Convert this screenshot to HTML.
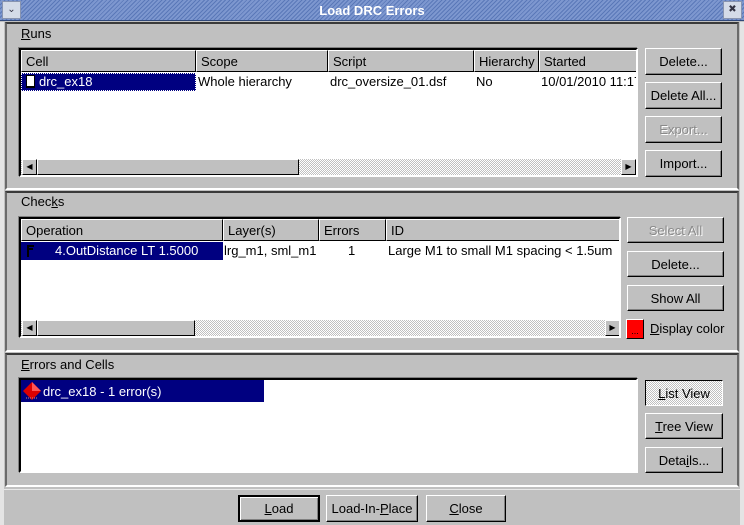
<!DOCTYPE html>
<html><head><style>
*{box-sizing:border-box;margin:0;padding:0}
body{width:744px;height:525px;background:#c0c0c0;font-family:"Liberation Sans",sans-serif;font-size:13px;color:#000;position:relative;overflow:hidden}
div{white-space:nowrap}
.a{position:absolute}
.title{left:0;top:0;width:744px;height:21px;background:repeating-linear-gradient(135deg,#5a78b8 0 1px,#7d97cf 1px 3px);border-bottom:1px solid #30487a}
.title span{position:absolute;left:0;right:0;top:3px;text-align:center;color:#fff;font-weight:bold;font-size:13px}
.tb{top:1px;width:19px;height:18px;background:#d4dbe8;border:1px solid #8894b0;font-size:10px;text-align:center;line-height:16px;color:#334}
.sec{left:5px;width:734px;border-top:2px solid #3a3a3a;border-left:2px solid #6a6a6a;border-right:2px solid #6a6a6a;border-bottom:2px solid #fff}
.box{background:#fff;border:2px solid #000;border-right-color:#fff;border-bottom-color:#fff;box-shadow:-1px -1px 0 #808080}
.hdr{top:0;height:22px;background:#c0c0c0;border:1px solid;border-color:#fff #000 #000 #fff;padding:3px 4px;overflow:hidden}
.btn{background:#c0c0c0;border:1px solid;border-color:#fff #000 #000 #fff;box-shadow:inset -1px -1px 0 #808080;text-align:center;line-height:25px}
.dis{color:#8a8a8a;text-shadow:1px 1px 0 #fff}
.sel{background:#000080;color:#fff}
.trough{background:repeating-conic-gradient(#c0c0c0 0 25%,#fff 0 50%) 0 0/2px 2px}
.sb{background:#c0c0c0;border:1px solid;border-color:#fff #000 #000 #fff}
u{text-decoration:underline}
</style></head><body>
<div class="a title"><span>Load DRC Errors</span></div>
<div class="a tb" style="left:2px">&#8964;</div>
<div class="a tb" style="left:723px">&#10006;</div>
<div class="a" style="left:0;top:22px;width:4px;height:503px;background:#e4e4e4"></div>
<div class="a" style="left:740px;top:22px;width:4px;height:503px;background:#e4e4e4"></div>

<!-- Runs -->
<div class="a sec" style="top:22px;height:168px"></div>
<div class="a" style="left:21px;top:26px"><u>R</u>uns</div>
<div class="a box" style="left:19px;top:48px;width:619px;height:129px;overflow:hidden">
 <div class="a hdr" style="left:0;width:175px">Cell</div>
 <div class="a hdr" style="left:175px;width:132px">Scope</div>
 <div class="a hdr" style="left:307px;width:146px">Script</div>
 <div class="a hdr" style="left:453px;width:65px">Hierarchy</div>
 <div class="a hdr" style="left:518px;width:100px">Started</div>
 <div class="a sel" style="left:0;top:23px;width:175px;height:18px;outline:1px dotted #fff;outline-offset:-1px"></div>
 <div class="a" style="left:5px;top:25px;width:9px;height:13px;background:#fff;border:1px solid #000;border-bottom-width:2px"></div>
 <div class="a" style="left:18px;top:24px;color:#fff">drc_ex18</div>
 <div class="a" style="left:177px;top:24px">Whole hierarchy</div>
 <div class="a" style="left:309px;top:24px">drc_oversize_01.dsf</div>
 <div class="a" style="left:455px;top:24px">No</div>
 <div class="a" style="left:520px;top:24px">10/01/2010 11:17</div>
 <div class="a trough" style="left:0;top:109px;width:617px;height:16px"></div>
 <div class="a sb" style="left:1px;top:109px;width:15px;height:16px;font-size:8px;text-align:center;line-height:14px">&#9664;</div>
 <div class="a sb" style="left:16px;top:109px;width:262px;height:16px"></div>
 <div class="a sb" style="left:600px;top:109px;width:15px;height:16px;font-size:8px;text-align:center;line-height:14px">&#9654;</div>
</div>
<div class="a btn" style="left:645px;top:48px;width:77px;height:27px">Delete...</div>
<div class="a btn" style="left:645px;top:82px;width:77px;height:27px">Delete All...</div>
<div class="a btn dis" style="left:645px;top:116px;width:77px;height:27px">Export...</div>
<div class="a btn" style="left:645px;top:150px;width:77px;height:27px">Import...</div>

<!-- Checks -->
<div class="a sec" style="top:191px;height:161px"></div>
<div class="a" style="left:21px;top:194px">Chec<u>k</u>s</div>
<div class="a box" style="left:19px;top:217px;width:602px;height:121px;overflow:hidden">
 <div class="a hdr" style="left:0;width:202px">Operation</div>
 <div class="a hdr" style="left:202px;width:96px">Layer(s)</div>
 <div class="a hdr" style="left:298px;width:67px">Errors</div>
 <div class="a hdr" style="left:365px;width:235px">ID</div>
 <div class="a sel" style="left:0;top:23px;width:202px;height:18px"></div>
 <svg class="a" style="left:4px;top:25px" width="10" height="14"><path d="M3 1V13M3 2H9M3 5H8" stroke="#000" stroke-width="2" fill="none"/></svg>
 <div class="a" style="left:34px;top:24px;color:#fff">4.OutDistance LT 1.5000</div>
 <div class="a" style="left:203px;top:24px">lrg_m1, sml_m1</div>
 <div class="a" style="left:327px;top:24px">1</div>
 <div class="a" style="left:367px;top:24px">Large M1 to small M1 spacing &lt; 1.5um</div>
 <div class="a trough" style="left:0;top:101px;width:600px;height:16px"></div>
 <div class="a sb" style="left:1px;top:101px;width:15px;height:16px;font-size:8px;text-align:center;line-height:14px">&#9664;</div>
 <div class="a sb" style="left:16px;top:101px;width:158px;height:16px"></div>
 <div class="a sb" style="left:584px;top:101px;width:15px;height:16px;font-size:8px;text-align:center;line-height:14px">&#9654;</div>
</div>
<div class="a btn dis" style="left:627px;top:217px;width:97px;height:26px">Select All</div>
<div class="a btn" style="left:627px;top:251px;width:97px;height:26px">Delete...</div>
<div class="a btn" style="left:627px;top:285px;width:97px;height:26px">Show All</div>
<div class="a" style="left:626px;top:319px;width:18px;height:20px;background:#f00;border:1px solid;border-color:#fff #000 #000 #fff;color:#000;font-size:9px;text-align:center;line-height:22px">...</div>
<div class="a" style="left:650px;top:321px"><u>D</u>isplay color</div>

<!-- Errors -->
<div class="a sec" style="top:353px;height:134px"></div>
<div class="a" style="left:21px;top:357px"><u>E</u>rrors and Cells</div>
<div class="a box" style="left:19px;top:378px;width:619px;height:95px">
 <div class="a sel" style="left:0;top:0;width:243px;height:22px"></div>
 <svg class="a" style="left:1px;top:1px" width="20" height="20"><polygon points="10,1 19,10 10,19 1,10" fill="#d00"/><polygon points="10,1 19,10 10,10" fill="#f55"/><line x1="4" y1="17" x2="16" y2="17" stroke="#c88" stroke-dasharray="1 1"/></svg>
 <div class="a" style="left:22px;top:4px;color:#fff">drc_ex18 - 1 error(s)</div>
</div>
<div class="a btn trough" style="left:645px;top:380px;width:78px;height:26px;border-color:#000 #fff #fff #000;box-shadow:none"><u>L</u>ist View</div>
<div class="a btn" style="left:645px;top:413px;width:78px;height:26px"><u>T</u>ree View</div>
<div class="a btn" style="left:645px;top:447px;width:78px;height:26px">Deta<u>i</u>ls...</div>

<!-- bottom -->
<div class="a" style="left:4px;top:489px;width:736px;height:1px;background:#e8e8e8"></div>
<div class="a btn" style="left:238px;top:495px;width:82px;height:27px;border:2px solid #000;box-shadow:inset 1px 1px 0 #fff,inset -1px -1px 0 #808080;line-height:23px"><u>L</u>oad</div>
<div class="a btn" style="left:326px;top:495px;width:92px;height:27px">Load-In-<u>P</u>lace</div>
<div class="a btn" style="left:426px;top:495px;width:80px;height:27px"><u>C</u>lose</div>
</body></html>
